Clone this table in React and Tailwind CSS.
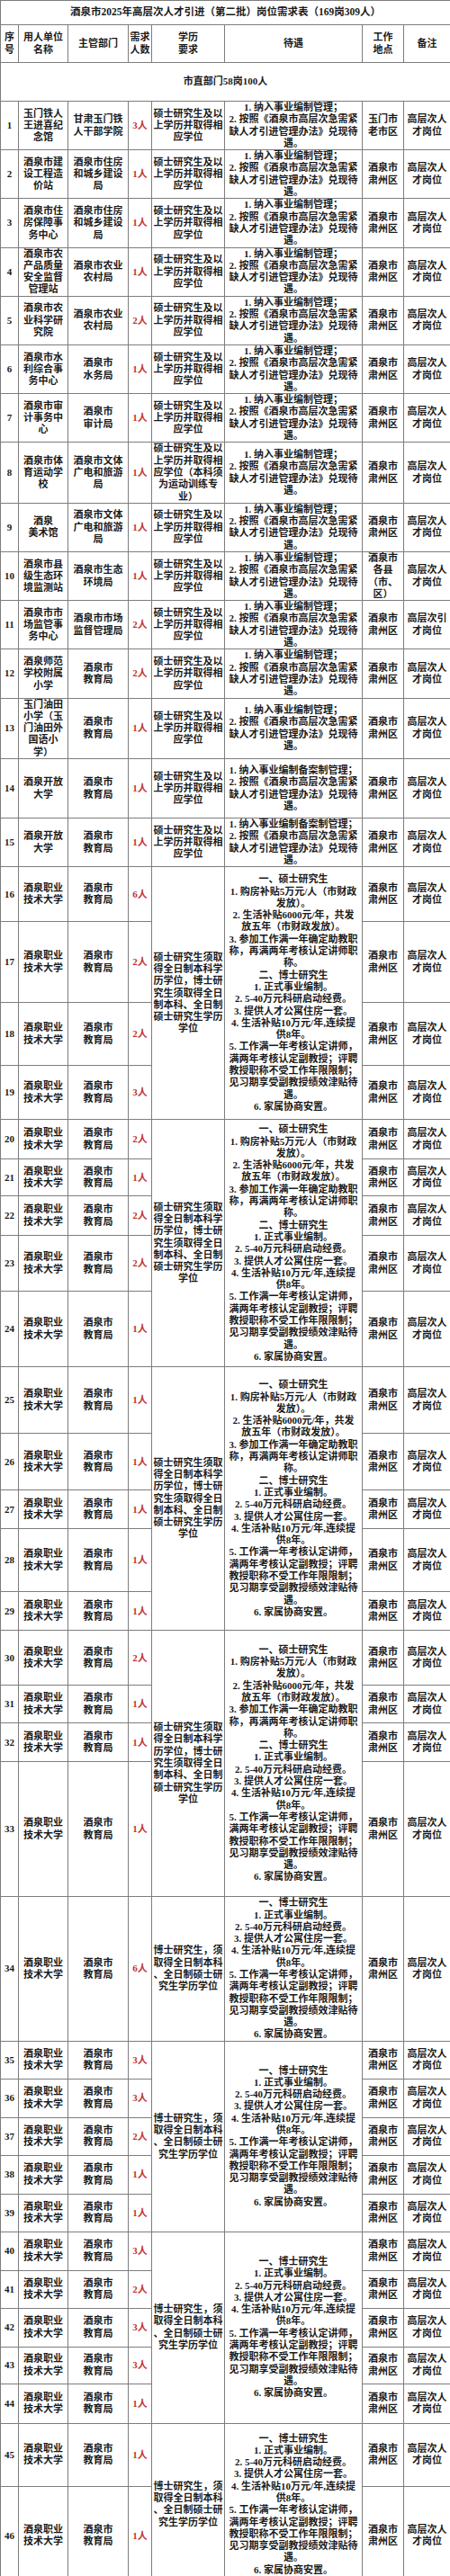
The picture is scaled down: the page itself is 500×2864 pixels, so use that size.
import React from "react";

const PAY_BASIC = "1. 纳入事业编制管理；\n2. 按照《酒泉市高层次急需紧\n缺人才引进管理办法》兑现待\n遇。";
const PAY_FILED = "1. 纳入事业编制备案制管理；\n2. 按照《酒泉市高层次急需紧\n缺人才引进管理办法》兑现待\n遇。";
const EDU_BASIC = "硕士研究生及以\n上学历并取得相\n应学位";
const EDU_MD = "硕士研究生须取\n得全日制本科学\n历学位，博士研\n究生须取得全日\n制本科、全日制\n硕士研究生学历\n学位";
const EDU_D = "博士研究生，须\n取得全日制本科\n、全日制硕士研\n究生学历学位";

const PAY_D_LINES = [
  "一、博士研究生",
  "1. 正式事业编制。",
  "2. 5-40万元科研启动经费。",
  "3. 提供人才公寓住房一套。",
  "4. 生活补贴10万元/年,连续提",
  "供8年。",
  "5. 工作满一年考核认定讲师，",
  "满两年考核认定副教授；评聘",
  "教授职称不受工作年限限制；",
  "见习期享受副教授绩效津贴待",
  "遇。",
  "6. 家属协商安置。",
];
const PAY_D = PAY_D_LINES.join("\n");
const PAY_MD = [
  "一、硕士研究生",
  "1. 购房补贴5万元/人（市财政",
  "发放）。",
  "2. 生活补贴6000元/年，共发",
  "放五年（市财政发放）。",
  "3. 参加工作满一年确定助教职",
  "称，再满两年考核认定讲师职",
  "称。",
  "二、博士研究生",
  ...PAY_D_LINES.slice(1),
].join("\n");

const LOC = "酒泉市\n肃州区";
const NOTE = "高层次人\n才岗位";
const EDU_DEPT = "酒泉市\n教育局";

// 1-15: every row has its own 学历 / 待遇 cells
const cityRows = [
  { name: "玉门铁人\n王进喜纪\n念馆", dept: "甘肃玉门铁\n人干部学院", num: "3人", loc: "玉门市\n老市区", h: "h-[53px]" },
  { name: "酒泉市建\n设工程造\n价站", dept: "酒泉市住房\n和城乡建设\n局", num: "1人", h: "h-[53px]" },
  { name: "酒泉市住\n房保障事\n务中心", dept: "酒泉市住房\n和城乡建设\n局", num: "1人", h: "h-[54px]" },
  { name: "酒泉市农\n产品质量\n安全监督\n管理站", dept: "酒泉市农业\n农村局", num: "1人", h: "h-[53px]" },
  { name: "酒泉市农\n业科学研\n究院", dept: "酒泉市农业\n农村局", num: "2人", h: "h-[53px]" },
  { name: "酒泉市水\n利综合事\n务中心", dept: "酒泉市\n水务局", num: "1人", h: "h-[54px]" },
  { name: "酒泉市审\n计事务中\n心", dept: "酒泉市\n审计局", num: "1人", h: "h-[53px]" },
  { name: "酒泉市体\n育运动学\n校", dept: "酒泉市文体\n广电和旅游\n局", num: "1人", edu: EDU_BASIC + "（本科须\n为运动训练专\n业）", h: "h-[67px]" },
  { name: "酒泉\n美术馆", dept: "酒泉市文体\n广电和旅游\n局", num: "1人", h: "h-[53px]" },
  { name: "酒泉市县\n级生态环\n境监测站", dept: "酒泉市生态\n环境局", num: "1人", loc: "酒泉市\n各县\n（市、\n区）", h: "h-[53px]" },
  { name: "酒泉市市\n场监管事\n务中心", dept: "酒泉市市场\n监督管理局", num: "2人", note: "高层次引\n才岗位", h: "h-[54px]" },
  { name: "酒泉师范\n学校附属\n小学", dept: EDU_DEPT, num: "2人", h: "h-[53px]" },
  { name: "玉门油田\n小学（玉\n门油田外\n国语小\n学）", dept: EDU_DEPT, num: "1人", h: "h-[67px]" },
  { name: "酒泉开放\n大学", dept: EDU_DEPT, num: "1人", pay: PAY_FILED, h: "h-[66px]" },
  { name: "酒泉开放\n大学", dept: EDU_DEPT, num: "1人", pay: PAY_FILED, h: "h-[54px]" },
];

// 16-46: 酒泉职业技术大学, 学历 / 待遇 merged by group
const vocRows = [
  { num: "6人", h: "h-[61px]", span: 4, edu: EDU_MD, pay: PAY_MD },
  { num: "2人", h: "h-[90px]" },
  { num: "2人", h: "h-[70px]" },
  { num: "3人", h: "h-[60px]" },
  { num: "2人", h: "h-[44px]", span: 5, edu: EDU_MD, pay: PAY_MD },
  { num: "1人", h: "h-[41px]" },
  { num: "2人", h: "h-[44px]" },
  { num: "2人", h: "h-[62px]" },
  { num: "1人", h: "h-[84px]" },
  { num: "1人", h: "h-[74px]", span: 5, edu: EDU_MD, pay: PAY_MD },
  { num: "1人", h: "h-[63px]" },
  { num: "1人", h: "h-[43px]" },
  { num: "1人", h: "h-[70px]" },
  { num: "1人", h: "h-[43px]" },
  { num: "2人", h: "h-[61px]", span: 4, edu: EDU_MD, pay: PAY_MD },
  { num: "1人", h: "h-[42px]" },
  { num: "1人", h: "h-[43px]" },
  { num: "1人", h: "h-[150px]" },
  { num: "6人", h: "h-[160px]", span: 1, edu: EDU_D, pay: PAY_D },
  { num: "3人", h: "h-[42px]", span: 5, edu: EDU_D, pay: PAY_D },
  { num: "3人", h: "h-[43px]" },
  { num: "2人", h: "h-[42px]" },
  { num: "1人", h: "h-[43px]" },
  { num: "1人", h: "h-[42px]" },
  { num: "3人", h: "h-[43px]", span: 5, edu: EDU_D, pay: PAY_D },
  { num: "2人", h: "h-[42px]" },
  { num: "3人", h: "h-[43px]" },
  { num: "3人", h: "h-[41px]" },
  { num: "1人", h: "h-[44px]" },
  { num: "1人", h: "h-[70px]", span: 2, edu: EDU_D, pay: PAY_D },
  { num: "1人", h: "h-[110px]" },
];

const td = "border border-[#7d7d7d] p-0 text-center align-middle whitespace-pre leading-[13.3px]";

const Row = ({ no, row, name, dept, loc, note }) => (
  <tr className={row.h}>
    <td className={td + " font-bold"}>{no}</td>
    <td className={td}>{name}</td>
    <td className={td}>{dept}</td>
    <td className={td + " font-bold text-[#c23434]"}>{row.num}</td>
    {row.span && (
      <>
        <td rowSpan={row.span} className={td}>{row.edu}</td>
        <td rowSpan={row.span} className={td}>{row.pay}</td>
      </>
    )}
    <td className={td}>{loc}</td>
    <td className={td}>{note}</td>
  </tr>
);

export default function App() {
  return (
    <div className="w-[500px] bg-white text-[#1a1a1a] font-['Liberation_Serif','Noto_Sans_CJK_SC',serif] text-[11px] font-semibold">
      <table className="w-[500px] table-fixed border-collapse">
        <colgroup>
          <col className="w-[20px]" />
          <col className="w-[55px]" />
          <col className="w-[67px]" />
          <col className="w-[26px]" />
          <col className="w-[81px]" />
          <col className="w-[153px]" />
          <col className="w-[46px]" />
          <col className="w-[52px]" />
        </colgroup>
        <tbody>
          <tr className="h-[27px]">
            <td colSpan={8} className={td + " font-bold text-[11.5px]"}>
              酒泉市2025年高层次人才引进（第二批）岗位需求表（169岗309人）
            </td>
          </tr>
          <tr className="h-[42px]">
            <td className={td}>{"序\n号"}</td>
            <td className={td}>{"用人单位\n名称"}</td>
            <td className={td}>主管部门</td>
            <td className={td}>{"需求\n人数"}</td>
            <td className={td}>{"学历\n要求"}</td>
            <td className={td}>待遇</td>
            <td className={td}>{"工作\n地点"}</td>
            <td className={td}>备注</td>
          </tr>
          <tr className="h-[43px]">
            <td colSpan={8} className={td + " font-bold"}>市直部门58岗100人</td>
          </tr>
          {cityRows.map((r, i) => (
            <Row
              key={i}
              no={i + 1}
              row={{ ...r, span: 1, edu: r.edu || EDU_BASIC, pay: r.pay || PAY_BASIC }}
              name={r.name}
              dept={r.dept}
              loc={r.loc || LOC}
              note={r.note || NOTE}
            />
          ))}
          {vocRows.map((r, i) => (
            <Row
              key={i + 16}
              no={i + 16}
              row={r}
              name={"酒泉职业\n技术大学"}
              dept={EDU_DEPT}
              loc={LOC}
              note={NOTE}
            />
          ))}
        </tbody>
      </table>
    </div>
  );
}
